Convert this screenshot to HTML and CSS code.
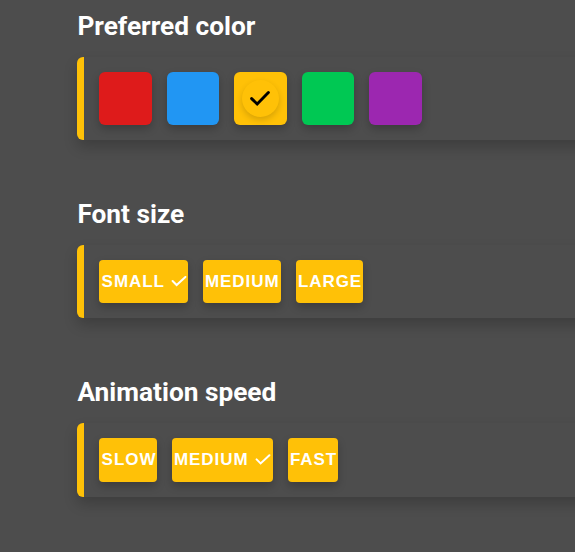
FILE: index.html
```html
<!DOCTYPE html>
<html lang="en">
<head>
<meta charset="utf-8">
<title>Settings</title>
<link rel="stylesheet" href="styles.css">
</head>
<body>
<main class="settings">
  <section class="group">
    <h2 class="title">Preferred color</h2>
    <div class="panel panel-colors">
      <button class="swatch red" aria-label="Red"></button>
      <button class="swatch blue" aria-label="Blue"></button>
      <button class="swatch amber" aria-label="Amber"><span class="badge"><svg class="badge-check" viewBox="0 0 24 24"><path d="M3.6 11.6 9.2 17 20.4 5.6"/></svg></span></button>
      <button class="swatch green" aria-label="Green"></button>
      <button class="swatch purple" aria-label="Purple"></button>
    </div>
  </section>
  <section class="group">
    <h2 class="title">Font size</h2>
    <div class="panel panel-size">
      <button class="option w-small"><span>SMALL</span><svg class="check" viewBox="0 0 16 12"><path d="M1.6 5 5.6 9 14.4 .9"/></svg></button>
      <button class="option tight w-medium"><span>MEDIUM</span></button>
      <button class="option tight w-large"><span>LARGE</span></button>
    </div>
  </section>
  <section class="group">
    <h2 class="title">Animation speed</h2>
    <div class="panel panel-speed">
      <button class="option w-slow"><span>SLOW</span></button>
      <button class="option tight w-medium-checked"><span>MEDIUM</span><svg class="check" viewBox="0 0 16 12"><path d="M1.6 5.4 5.6 9.4 14.4 1.2"/></svg></button>
      <button class="option tight w-fast"><span>FAST</span></button>
    </div>
  </section>
</main>
</body>
</html>
```
FILE: styles.css
```css
* { box-sizing: border-box; }

body {
  margin: 0;
  height: 552px;
  overflow: hidden;
  background: #4d4d4d;
  color: #fff;
}

.settings {
  width: 640px;
  padding: 11px 0 0 77px;
}

.group { margin-bottom: 59px; }

.title {
  margin: 0 0 16px;
  padding-left: .4px;
  height: 30px;
  font: 700 26.25px/30px Roboto, sans-serif;
}

.panel {
  display: flex;
  gap: 15px;
  padding: 15px;
  border-left: 7px solid #ffc107;
  border-radius: 6px;
  background: #4d4d4d;
  box-shadow: 0 7px 14px rgba(0, 0, 0, .2);
}

.panel-colors { height: 83px; }
.panel-size { height: 73px; }
.panel-speed { height: 74px; }

.swatch,
.option {
  display: flex;
  flex: none;
  align-items: center;
  border: 0;
  box-shadow: 0 4px 8px rgba(0, 0, 0, .22);
}

.swatch {
  justify-content: center;
  width: 52.5px;
  height: 53px;
  padding: 0;
  border-radius: 6px;
}

.red { background: #de1b1b; }
.blue { background: #2196f3; }
.amber { background: #ffc107; }
.green { background: #00c853; }
.purple { background: #9c27b0; }

.badge {
  display: flex;
  align-items: center;
  justify-content: center;
  width: 37.5px;
  height: 37.5px;
  border-radius: 50%;
  box-shadow: 0 3px 6px rgba(0, 0, 0, .16);
  background: #ffc107;
}

.badge-check {
  width: 24px;
  height: 24px;
  fill: none;
  stroke: #000;
  stroke-width: 2.9;
  stroke-linecap: round;
}

.option {
  padding: 0 0 0 2.6px;
  border-radius: 4px;
  background: #ffc107;
  color: #fff;
  font: 700 17px/20px "Liberation Sans", Arial, sans-serif;
  letter-spacing: .95px;
}

.tight { padding-left: 1.9px; }

.w-small { width: 89px; }
.w-medium { width: 78px; }
.w-large { width: 67px; }
.w-slow { width: 58px; }
.w-medium-checked { width: 101px; }
.w-fast { width: 50px; }

.check {
  flex: none;
  width: 16px;
  height: 12px;
  margin-left: 6.5px;
  fill: none;
  stroke: #fff;
  stroke-width: 2;
  stroke-linecap: round;
}
```
